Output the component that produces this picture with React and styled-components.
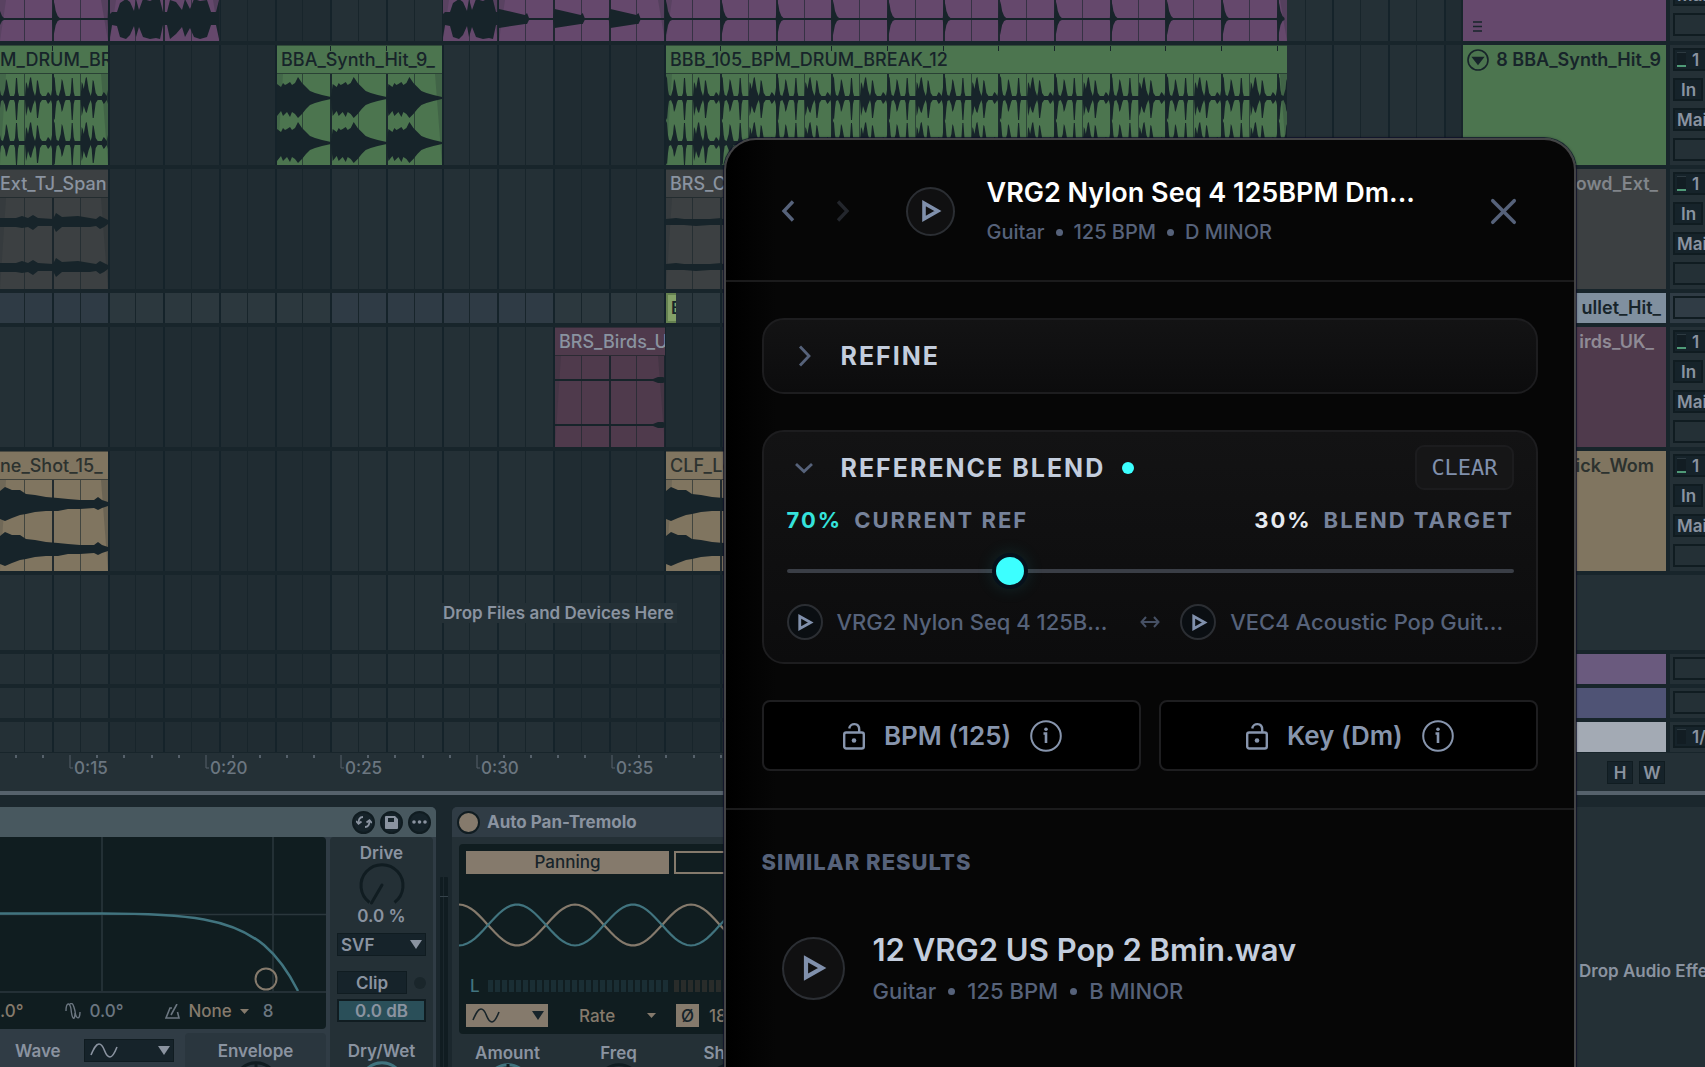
import React from "react";
import styled, { createGlobalStyle, css } from "styled-components";
import { X } from "lucide-react";

const c = {
  gap: "#18252b",
  panel: "#243036",
  well: "#101d20",
  field: "#16232a",
  edge: "#101c21",
  raised: "#303c45",
  text: "#8a93a0",
  textDim: "#6b7680",
  teal: "#41747f",
  tan: "#857a6c",
  ink: "#17242a",
  purple: "#65486c",
  green: "#4c754f",
  grey: "#3c4042",
  plum: "#4f3a4c",
  sand: "#807560",
  slate: "#56627a",
  steel: "#8090ac",
  mist: "#c3cddd",
  cyan: "#3cffff",
};

const Global = createGlobalStyle`
  *, *::before, *::after { box-sizing: border-box; }
  body { margin: 0; background: ${c.gap}; font-family: Inter, sans-serif; }
  button, input, select { font: inherit; color: inherit; margin: 0; }
  button { border: 0; padding: 0; background: none; cursor: pointer; }
  h1, h2, h3, p { margin: 0; font-weight: inherit; font-size: inherit; }
`;

/* ---------- shell ---------- */

const Shell = styled.div`
  position: relative;
  display: flex;
  flex-direction: column;
  height: 100vh;
  overflow: hidden;
  font-size: 17px;
  line-height: 20px;
  font-weight: 600;
  color: ${c.text};
`;

const Tracks = styled.main`
  display: flex;
  flex-direction: column;
  flex: none;
  gap: 4px;
`;

const TrackRow = styled.section`
  display: grid;
  grid-template-columns: minmax(0, 1fr) 203px 39px;
  height: ${(p) => p.$h}px;
`;

const Lane = styled.div`
  position: relative;
  overflow: hidden;
  border-right: 2px solid ${c.gap};
`;

const GridArt = styled.svg`
  position: absolute;
  inset: 0;
  width: 100%;
  height: 100%;
`;

const DropHint = styled.div`
  position: relative;
  display: flex;
  align-items: center;
  height: 100%;
  padding-left: 440px;
  span { background: ${c.panel}; padding: 0 3px; }
`;

/* ---------- clips ---------- */

const ClipBox = styled.article`
  position: absolute;
  top: 0;
  bottom: 0;
  left: ${(p) => p.$x}px;
  width: ${(p) => p.$w}px;
  overflow: hidden;
  background: ${(p) => p.$bg};
`;

const ClipArt = styled.svg`
  position: absolute;
  inset: 0;
`;

const ClipName = styled.h3`
  position: relative;
  height: 29px;
  padding: 4px 0 0 ${(p) => (p.$cut ? 0 : 4)}px;
  border-top: 1px solid rgba(20, 32, 36, 0.5);
  border-bottom: 1px solid rgba(20, 32, 36, 0.6);
  font-size: 18px;
  font-weight: 500;
  white-space: nowrap;
  color: ${(p) => p.$fg};
`;

const STEP = 27.84;
const ORIGIN = 25;
const lineX = (i) => Math.round(ORIGIN + i * STEP);
const LINES = Array.from({ length: 120 }, (_, i) => i);

function LaneGrid({ group }) {
  const light = group ? "#2f3b45" : "#243036";
  const dark = group ? "#2c383e" : "#202c32";
  return (
    <GridArt aria-hidden="true">
      <rect width="100%" height="100%" fill={light} />
      {[3, 19, 35, 51, 67].map((i) => (
        <rect key={i} x={lineX(i)} width={lineX(i + 8) - lineX(i)} height="100%" fill={dark} />
      ))}
      {LINES.map((i) => (
        <rect key={i} x={lineX(i) - 1} width={i % 2 ? 2 : 1} height="100%" fill={i % 2 ? "#15232a" : "#18252b"} />
      ))}
    </GridArt>
  );
}

/* Each envelope is a list of [x, top, bottom] samples around a centre line. */
const DRUM = [
  [0, 22, 20], [1, 20, 22], [2, 8, 10], [3, 3, 3], [5, 2, 2], [7, 9, 7], [8, 19, 14], [9, 17, 12], [11, 6, 4], [12, 2, 2], [16, 2, 2],
  [17, 5, 5], [18, 20, 22], [19, 20, 22], [20, 6, 6], [21, 2, 2], [27, 2, 2], [28, 16, 18], [29, 14, 14], [30, 9, 8], [32, 20, 14],
  [33, 21, 15], [35, 8, 7], [37, 2, 2], [38, 6, 6], [39, 18, 20], [40, 17, 20], [42, 5, 5], [44, 2, 2], [48, 2, 2], [50, 6, 6],
  [51, 5, 5], [53, 2, 2], [54, 8, 6],
];
const SYNTH = [
  [0, 14, 18], [4, 11, 13], [6, 15, 18], [8, 13, 16], [10, 14, 14], [13, 16, 19], [15, 13, 14], [18, 15, 16], [21, 21, 20],
  [25, 15, 16], [29, 11, 11], [33, 7, 7], [38, 5, 5], [45, 3, 3], [54, 1, 1],
];
const TICK = [[0, 18, 16], [1, 14, 11], [2, 8, 6], [4, 3, 2], [6, 1, 1], [54, 1, 1], [55, 10, 8]];
const WEDGE = [[0, 10, 9], [26, 4, 5], [28, 6, 5], [30, 1, 1], [54, 1, 1]];
const VOICE = [
  [0, 5, 18], [2, 7, 6], [7, 7, 7], [10, 16, 18], [16, 20, 20], [20, 17, 16], [24, 8, 7], [26, 20, 18], [29, 9, 8],
  [33, 20, 18], [40, 18, 20], [46, 21, 19], [50, 19, 20], [53, 7, 6], [57, 7, 6], [60, 19, 20], [66, 17, 15],
  [72, 9, 8], [75, 20, 18], [80, 10, 9], [84, 20, 18], [90, 18, 20], [97, 19, 18], [101, 7, 6], [106, 7, 6], [109, 19, 20],
];
const CROWD = [
  [0, 4, 5], [16, 4, 5], [22, 6, 6], [28, 4, 5], [33, 7, 8], [38, 4, 4], [53, 3, 4], [56, 9, 10], [62, 5, 5],
  [78, 6, 5], [90, 4, 5], [96, 3, 4], [100, 6, 7], [104, 4, 5], [108, 2, 2],
];
const HUM = [[0, 3, 3], [10, 4, 3], [18, 3, 3], [30, 3, 4], [44, 3, 3], [56, 4, 3]];
const BIRDS = [[0, 1, 1], [98, 1, 1], [103, 3, 3], [108, 3, 3], [110, 2, 2]];
const GUITAR = [
  [0, 13, 15], [5, 17, 17], [12, 14, 14], [20, 14, 11], [26, 10, 10], [35, 9, 8], [46, 7, 7], [58, 6, 7], [68, 5, 5],
  [80, 4, 5], [94, 4, 4], [98, 7, 6], [102, 4, 4], [108, 2, 2],
];

function wavePath(env, cy, w, period) {
  const span = period || w;
  const top = [];
  const bottom = [];
  for (let s = 0; s < w; s += span) {
    env.forEach(([x, t, b]) => {
      const px = Math.min(s + x, w);
      if (s + x <= w + 4) {
        top.push(`${px.toFixed(1)},${cy - t}`);
        bottom.unshift(`${px.toFixed(1)},${cy + b}`);
      }
    });
  }
  return `M${top.join("L")}L${bottom.join("L")}Z`;
}

function Clip({ x, w, bg, fg, name, cut, env, period, offset = 0, h = 120, centres = [53, 98] }) {
  return (
    <ClipBox $x={x} $w={w} $bg={bg}>
      <ClipArt width={w} height={h} aria-hidden="true">
        {LINES.map((i) => {
          const px = lineX(i) - 1 - x;
          return px > 0 && px < w ? (
            <g key={i} fill={c.ink}>
              <rect x={px} y={name ? 29 : 0} width={i % 2 ? 2 : 1} height={h} opacity={i % 2 ? 0.9 : 0.6} />
              {bg === c.green && i % 2 === 1 && <rect x={px} y="1" width="1" height="5" />}
            </g>
          ) : null;
        })}
        <path d={`M${w - 7} ${name ? 29 : 0}H${w}V${h}Z`} fill={c.ink} opacity="0.2" />
        <path d={`M6 ${name ? 29 : 0}H0V${h}Z`} fill={c.ink} opacity="0.15" />
        <g fill={c.ink} transform={`translate(${-offset} 0)`}>
          {centres.map((cy) => (
            <path key={cy} d={wavePath(env, cy, w + offset, period)} />
          ))}
        </g>
      </ClipArt>
      {name && <ClipName $fg={fg} $cut={cut}>{name}</ClipName>}
    </ClipBox>
  );
}

const MiniClip = styled(ClipBox)`
  padding: 3px 0 0 3px;
  border: 2px solid #64804f;
  border-right: 0;
  color: ${c.ink};
`;

/* ---------- track headers and mixer ---------- */

const TrackHead = styled.header`
  display: flex;
  align-items: ${(p) => (p.$bottom ? "flex-end" : "flex-start")};
  justify-content: space-between;
  padding: 4px 5px ${(p) => (p.$bottom ? 9 : 4)}px 4px;
  overflow: hidden;
  background: ${(p) => p.$bg};
  color: ${(p) => p.$fg || c.ink};
  font-size: 18px;
  line-height: 22px;
  white-space: nowrap;
`;

const TailName = styled.span`
  margin-left: auto;
  padding-right: ${(p) => p.$end || 0}px;
`;

const FoldButton = styled.button`
  display: flex;
`;

const Mixer = styled.div`
  display: flex;
  flex-direction: column;
  justify-content: ${(p) => (p.$bottom ? "flex-end" : "flex-start")};
  gap: 7px;
  overflow: hidden;
  padding: 3px 0 5px 3px;
  border-left: 4px solid ${c.gap};
  background: ${(p) => (p.$group ? c.raised : c.panel)};
`;

const Slot = styled.div`
  flex: none;
  display: flex;
  align-items: center;
  gap: 6px;
  width: ${(p) => (p.$short ? 30 : 60)}px;
  height: 23px;
  padding-left: ${(p) => (p.$short ? 6 : 2)}px;
  border: 2px solid ${c.edge};
  background: ${(p) => (p.$filled ? c.field : "transparent")};
`;

const Led = styled.i`
  width: 9px;
  height: 15px;
  background: #121d23;
  border-top: 1px solid #2c3940;
  border-bottom: 2px solid ${(p) => (p.$on ? "#4f9a77" : "#121d23")};
`;

function FullMixer() {
  return (
    <Mixer>
      <Slot $filled><Led $on />1</Slot>
      <Slot $filled $short>In</Slot>
      <Slot $filled>Main</Slot>
      <Slot />
    </Mixer>
  );
}

/* ---------- ruler ---------- */

const RulerRow = styled.div`
  flex: none;
  display: grid;
  grid-template-columns: minmax(0, 1fr) 242px;
  height: 39px;
  border-top: 1px solid ${c.gap};
  background: ${c.panel};
`;

const RulerArt = styled.svg`
  width: 100%;
  height: 38px;
  font-size: 17px;
  font-weight: 500;
`;

const ZoomButtons = styled.div`
  display: flex;
  justify-content: flex-end;
  align-items: flex-start;
  gap: 6px;
  padding: 8px 40px 0 0;
`;

const SquareButton = styled.button`
  width: 26px;
  height: 23px;
  border: 1px solid ${c.edge};
  background: ${c.field};
`;

function Ruler() {
  const marks = Array.from({ length: 54 }, (_, i) => i);
  return (
    <RulerArt aria-label="Time ruler">
      {marks.map((i) => {
        const x = Math.round(16 + i * 27.1);
        const major = i % 5 === 2;
        const sec = 15 + ((i - 2) / 5) * 5;
        return major ? (
          <g key={i}>
            <path d={`M${x} 2v13h3`} fill="none" stroke="#56616b" strokeWidth="1" />
            {x < 720 && <text x={x + 4} y="21" fill={c.textDim}>{`0:${sec}`}</text>}
          </g>
        ) : (
          <rect key={i} x={x - 1} y="2" width="2" height="3" fill="#56616b" />
        );
      })}
    </RulerArt>
  );
}

/* ---------- devices ---------- */

const Devices = styled.section`
  flex: 1;
  min-height: 0;
  display: flex;
  gap: 4px;
  padding-top: 12px;
  border-top: 4px solid #56626c;
  background: #1b272d;
  overflow: hidden;
`;

const Device = styled.article`
  display: flex;
  flex-direction: column;
  flex: ${(p) => (p.$w ? "none" : "1")};
  width: ${(p) => (p.$w ? `${p.$w}px` : "auto")};
  min-width: 0;
  border-radius: ${(p) => (p.$w ? "0 5px 0 0" : "5px 5px 0 0")};
  overflow: hidden;
  background: ${(p) => p.$bg};
`;

const TitleBar = styled.header`
  display: flex;
  align-items: center;
  justify-content: ${(p) => (p.$end ? "flex-end" : "flex-start")};
  gap: ${(p) => (p.$end ? 5 : 7)}px;
  height: 30px;
  flex: none;
  padding: 0 5px;
  background: ${(p) => p.$bg};
  font-weight: 700;
`;

const RoundButton = styled.button`
  display: grid;
  place-items: center;
  width: 23px;
  height: 23px;
  border-radius: 50%;
  background: ${(p) => (p.$tan ? c.tan : c.field)};
  border: 2px solid ${c.edge};
`;

const DeviceBody = styled.div`
  flex: 1;
  min-height: 0;
  display: flex;
  justify-content: space-between;
  padding-right: 3px;
`;

const FilterColumn = styled.div`
  width: 326px;
  display: flex;
  flex-direction: column;
  > * { flex-shrink: 0; }
`;

const FilterGraph = styled.svg`
  display: block;
  width: 326px;
  height: 154px;
  background: ${c.well};
  border-radius: 0 4px 0 0;
`;

const Readouts = styled.div`
  display: flex;
  align-items: center;
  height: 38px;
  border-top: 2px solid ${c.panel};
  border-radius: 0 0 4px 0;
  background: ${c.well};
  font-weight: 500;
  color: ${c.textDim};
`;

const Readout = styled.span`
  display: flex;
  align-items: center;
  gap: 8px;
  margin-right: ${(p) => p.$gap}px;
  color: ${(p) => (p.$tan ? c.tan : "inherit")};
`;

const WaveRow = styled.div`
  flex: 1;
  display: grid;
  grid-template-columns: 1fr 90px 141px;
  column-gap: 11px;
  align-items: start;
  padding-left: 15px;
`;

const WaveLabel = styled.label`
  padding-top: 12px;
`;

const Panel = styled.div`
  display: flex;
  flex-direction: column;
  align-items: center;
  width: ${(p) => p.$w}px;
  height: 100%;
  margin-top: ${(p) => p.$top}px;
  padding-top: ${(p) => p.$pad}px;
  border-radius: 4px 4px 0 0;
  background: ${(p) => p.$bg};
  > * { flex-shrink: 0; }
`;

const PickerBox = styled.div`
  display: grid;
  flex: none;
  align-items: center;
  width: ${(p) => p.$w}px;
  height: 23px;
  margin-top: ${(p) => p.$top || 0}px;
  border: 1px solid ${(p) => (p.$tan ? c.tan : c.edge)};
  background: ${(p) => (p.$tan ? c.tan : c.field)};
  color: ${(p) => (p.$tan ? c.ink : c.text)};
  > * { grid-area: 1 / 1; }
  > svg { justify-self: end; margin-right: 3px; pointer-events: none; }
  > svg[data-side="start"] { justify-self: start; margin: 0 0 0 5px; }
`;

const PickerSelect = styled.select`
  appearance: none;
  width: 100%;
  height: 21px;
  padding: 0 0 0 3px;
  border: 0;
  background: transparent;
  ${(p) => p.$hidden && css`opacity: 0;`}
`;

const ClipRow = styled.div`
  display: flex;
  align-items: center;
  justify-content: space-between;
  width: 89px;
  margin-top: 15px;
`;

const ClipButton = styled.button`
  width: 70px;
  height: 23px;
  border: 1px solid ${c.edge};
  background: ${c.field};
`;

const Lamp = styled.i`
  width: 12px;
  height: 12px;
  border-radius: 50%;
  background: #1a262b;
`;

const Amount = styled.input`
  width: 89px;
  height: 23px;
  margin: 5px 0 19px;
  padding: 0;
  border: 2px solid ${c.edge};
  background: #2a4f59;
  text-align: center;
`;

const MeterStrip = styled.div`
  flex: none;
  width: 8px;
  margin-top: 70px;
  background: linear-gradient(${c.edge}, ${c.edge}) 0 0 / 3px 100% no-repeat,
    linear-gradient(${c.edge}, ${c.edge}) 100% 0 / 4px 100% no-repeat;
  border-radius: 1px;
  &::before {
    content: "";
    display: block;
    height: 1px;
    margin-top: 19px;
    background: #35424a;
  }
`;

const PanScreen = styled.div`
  flex: none;
  display: flex;
  flex-direction: column;
  height: 190px;
  margin: 7px 7px 0;
  padding: 7px 0;
  border-radius: 4px;
  background: ${c.well};
`;

const PanRow = styled.div`
  display: flex;
  align-items: center;
  gap: ${(p) => p.$gap || 0}px;
  height: ${(p) => p.$h}px;
  margin-top: ${(p) => p.$top || 0}px;
  padding-left: ${(p) => p.$left || 7}px;
  color: ${(p) => p.$fg || c.tan};
  font-weight: 500;
`;

const Tab = styled.button`
  width: 203px;
  height: 23px;
  border: 2px solid ${c.tan};
  background: ${(p) => (p.$on ? c.tan : "transparent")};
  line-height: 19px;
  color: ${c.ink};
`;

const PanWave = styled.svg`
  width: 100%;
  height: 100px;
`;

const RateButton = styled.button`
  display: flex;
  align-items: center;
  justify-content: space-between;
  width: 77px;
  margin: 0 20px 0 31px;
  color: ${c.tan};
`;

const PhaseButton = styled.button`
  width: 23px;
  height: 23px;
  margin-right: 10px;
  background: ${c.tan};
  color: ${c.ink};
`;

const KnobRow = styled.div`
  display: flex;
  padding-top: 9px;
`;

const KnobCell = styled.div`
  display: flex;
  flex-direction: column;
  align-items: center;
  flex: none;
  width: 111px;
`;

const DropZone = styled.aside`
  flex: none;
  display: flex;
  align-items: center;
  width: 129px;
  padding: 67px 0 0 3px;
  overflow: hidden;
  white-space: nowrap;
  background: ${c.panel};
`;

const Down = ({ w = 12, h = 9 }) => (
  <svg width={w} height={h} viewBox="0 0 12 9" preserveAspectRatio="none" fill="currentColor" aria-hidden="true">
    <path d="M0 0H12L6 9Z" />
  </svg>
);

const SineIcon = ({ side }) => (
  <svg data-side={side} width="28" height="17" viewBox="0 0 28 17" fill="none" stroke="currentColor" strokeWidth="1.6" aria-hidden="true">
    <path d="M1 13C4 6 6 2 9 2C15 2 14 15 20 15C23 15 25 10 27 5" />
  </svg>
);

const Knob = ({ top, color = c.edge, angle = true }) => (
  <svg width="48" height="43" viewBox="0 0 48 43" fill="none" strokeWidth="3" aria-hidden="true">
    <path d="M11.500 39.500A21 21 0 1 1 36.500 39.500" stroke={color} />
    {angle && <path d="M24 22L13.500 40" stroke={c.edge} strokeLinecap="round" />}
    {top && <path d="M24 1V12" stroke={c.edge} />}
  </svg>
);

function FilterDevice() {
  return (
    <Device $w={436} $bg={c.raised}>
      <TitleBar $bg="#48585f" $end>
        <RoundButton aria-label="Hot-swap">
          <svg width="16" height="14" viewBox="0 0 16 14" fill="none" stroke="currentColor" strokeWidth="1.8">
            <path d="M7 2C3.500 2 2.500 4.500 2.500 8M0 6L2.500 8.800L5.500 6.500M9 12C12.500 12 13.500 9.500 13.500 6M16 8L13.500 5.200L10.500 7.500" />
          </svg>
        </RoundButton>
        <RoundButton aria-label="Save preset">
          <svg width="13" height="13" viewBox="0 0 13 13" fill="currentColor"><path d="M0 1Q0 0 1 0H10L13 3V12Q13 13 12 13H1Q0 13 0 12ZM3 2V6H9V2Z" fillRule="evenodd" /></svg>
        </RoundButton>
        <RoundButton aria-label="More options">
          <svg width="15" height="4" viewBox="0 0 15 4" fill="currentColor"><circle cx="2" cy="2" r="1.800" /><circle cx="7.500" cy="2" r="1.800" /><circle cx="13" cy="2" r="1.800" /></svg>
        </RoundButton>
      </TitleBar>
      <DeviceBody>
        <FilterColumn>
          <FilterGraph viewBox="0 0 326 154" aria-label="Filter response">
            <path d="M102 0V154M273 0V154M0 77.500H326" stroke="#2a373c" strokeWidth="1.500" />
            <path d="M0 76.500H102C190 76.500 232 82 264 108C278 120 289 136 298 154" fill="none" stroke={c.teal} strokeWidth="2.500" />
            <circle cx="266" cy="142" r="10.500" fill="none" stroke={c.tan} strokeWidth="2" />
          </FilterGraph>
          <Readouts>
            <Readout $tan $gap={42}>.0°</Readout>
            <Readout $gap={42}>
              <svg width="16" height="16" viewBox="0 0 16 16" fill="none" stroke="currentColor" strokeWidth="1.400" aria-hidden="true">
                <path d="M1 8C1 -1 5 -1 6 6C7 17 10 18 10 10M5 1C8 -1 9 4 10 8C11 17 15 17 15 9" />
              </svg>
              0.0°
            </Readout>
            <Readout $tan $gap={14}>
              <svg width="15" height="15" viewBox="0 0 15 15" fill="none" stroke={c.textDim} strokeWidth="1.600" aria-hidden="true">
                <path d="M7 4H5L1 14H14L12.500 8M6 11L12 0" />
              </svg>
              None
              <Down w={9} h={5} />
            </Readout>
            <Readout>8</Readout>
          </Readouts>
          <WaveRow>
            <WaveLabel htmlFor="lfo-wave">Wave</WaveLabel>
            <PickerBox $w={90} $top={10}>
              <SineIcon side="start" />
              <PickerSelect id="lfo-wave" $hidden><option aria-label="Sine" /></PickerSelect>
              <Down />
            </PickerBox>
            <Panel $w={141} $top={4} $pad={8} $bg="#2a363e">
              Envelope
              <Knob angle={false} top />
            </Panel>
          </WaveRow>
        </FilterColumn>
        <Panel $w={103} $top={0} $pad={6} $bg={c.panel}>
          Drive
          <Knob />
          0.0 %
          <PickerBox $w={89} $top={7}>
            <PickerSelect aria-label="Circuit" defaultValue="SVF"><option>SVF</option></PickerSelect>
            <Down />
          </PickerBox>
          <ClipRow><ClipButton>Clip</ClipButton><Lamp /></ClipRow>
          <Amount aria-label="Output level" defaultValue="0.0 dB" />
          Dry/Wet
          <Knob color={c.teal} angle={false} />
        </Panel>
      </DeviceBody>
    </Device>
  );
}

const sine = (sign) => {
  const pts = [];
  for (let x = 0; x <= 560; x += 4) pts.push(`${x},${(51 - sign * 20.5 * Math.cos((x * 2 * Math.PI) / 116)).toFixed(1)}`);
  return pts.join(" ");
};

function PanDevice() {
  return (
    <Device $bg={c.panel}>
      <TitleBar $bg={c.raised}>
        <RoundButton $tan aria-label="Device on" />
        Auto Pan-Tremolo
      </TitleBar>
      <PanScreen>
        <PanRow $h={23} $gap={5}>
          <Tab $on>Panning</Tab>
          <Tab aria-label="Tremolo" />
        </PanRow>
        <PanWave aria-label="Pan modulation">
          <polyline points={sine(1)} fill="none" stroke={c.tan} strokeWidth="2.200" />
          <polyline points={sine(-1)} fill="none" stroke={c.teal} strokeWidth="2.200" />
        </PanWave>
        <PanRow $h={24} $left={11} $gap={8} $fg={c.teal}>
          L
          <svg width="400" height="12" aria-hidden="true">
            {Array.from({ length: 56 }, (_, i) => (
              <rect key={i} x={i * 7 + (i > 25 ? 4 : 0)} width="5" height="12" fill={i > 25 ? "#292c2a" : "#1a2e34"} />
            ))}
          </svg>
        </PanRow>
        <PanRow $h={23} $top={6}>
          <PickerBox $w={82} $tan>
            <SineIcon side="start" />
            <PickerSelect $hidden aria-label="Modulation shape"><option aria-label="Sine" /></PickerSelect>
            <Down />
          </PickerBox>
          <RateButton>Rate<Down w={9} h={5} /></RateButton>
          <PhaseButton>Ø</PhaseButton>
          180°
        </PanRow>
      </PanScreen>
      <KnobRow>
        <KnobCell>Amount<Knob color={c.teal} angle={false} top /></KnobCell>
        <KnobCell>Freq<Knob angle={false} /></KnobCell>
        <KnobCell>Shape<Knob angle={false} /></KnobCell>
      </KnobRow>
    </Device>
  );
}

/* ---------- sample browser dialog ---------- */

const Dialog = styled.div`
  position: absolute;
  top: 138px;
  right: 129px;
  bottom: 0;
  width: 50%;
  overflow: hidden;
  border: 2px solid #434345;
  border-bottom: 0;
  border-radius: 32px 32px 0 0;
  background: linear-gradient(90deg, #000, #060606 50px);
  box-shadow: 0 0 0 1px rgba(14, 16, 44, 0.7), 0 0 3px rgba(0, 0, 0, 0.6);
  font-weight: 500;
`;

const DialogHeader = styled.header`
  display: flex;
  align-items: center;
  height: 142px;
  padding: 2px 47px 0 37px;
  border-bottom: 2px solid #1b1b1c;
`;

const NavButton = styled.button`
  display: grid;
  place-items: center;
  width: 53px;
  height: 48px;
  color: ${c.slate};
  &:disabled { color: #23262c; }
`;

const PlayButton = styled.button`
  flex: none;
  display: grid;
  place-items: center;
  width: ${(p) => p.$size}px;
  height: ${(p) => p.$size}px;
  margin-left: ${(p) => p.$left || 0}px;
  border: 2px solid #2b2e33;
  border-radius: 50%;
  background: ${(p) => (p.$deep ? "#0a0e12" : "#101011")};
  color: ${c.steel};
`;

const TitleBlock = styled.div`
  flex: 1;
  display: flex;
  flex-direction: column;
  gap: 8px;
  margin-left: ${(p) => p.$left}px;
`;

const SampleTitle = styled.h2`
  font-size: ${(p) => (p.$large ? 31 : 27)}px;
  line-height: ${(p) => (p.$large ? 38 : 34)}px;
  font-weight: 600;
  white-space: nowrap;
  color: ${(p) => (p.$large ? c.mist : "#fff")};
`;

const Meta = styled.p`
  display: flex;
  align-items: center;
  gap: ${(p) => (p.$large ? 12 : 11)}px;
  font-size: ${(p) => (p.$large ? 22 : 20)}px;
  line-height: 28px;
  color: ${c.slate};
  i { width: 7px; height: 7px; border-radius: 50%; background: currentColor; }
`;

const CloseButton = styled.button`
  display: grid;
  place-items: center;
  width: 48px;
  height: 48px;
  color: ${c.slate};
`;

const Controls = styled.div`
  display: flex;
  flex-direction: column;
  gap: 36px;
  padding: 36px 36px 37px;
  border-bottom: 2px solid #1b1b1c;
`;

const Card = styled.section`
  padding: ${(p) => (p.$open ? "13px 22px 22px 23px" : "0 22px 0 23px")};
  border: 2px solid #1d1d1f;
  border-radius: 22px;
  background: linear-gradient(#131314, #0c0c0d);
`;

const CardHead = styled.div`
  display: flex;
  align-items: center;
  justify-content: space-between;
  height: ${(p) => p.$h}px;
`;

const Fold = styled.button`
  display: flex;
  align-items: center;
  gap: 25px;
  padding-left: 5px;
  font-size: 25px;
  line-height: 30px;
  font-weight: 700;
  letter-spacing: 2px;
  color: ${c.mist};
  svg { color: ${c.slate}; }
`;

const ActiveDot = styled.i`
  width: 12px;
  height: 12px;
  margin-left: -8px;
  border-radius: 50%;
  background: ${c.cyan};
`;

const ClearButton = styled.button`
  width: 99px;
  height: 45px;
  border: 2px solid #1c1c1e;
  border-radius: 9px;
  background: #161617;
  font-family: "DejaVu Sans Mono", monospace;
  font-size: 22px;
  color: ${c.steel};
`;

const BlendLabels = styled.div`
  display: flex;
  justify-content: space-between;
  margin-top: 16px;
  font-size: 22px;
  line-height: 28px;
  font-weight: 700;
  letter-spacing: 2px;
  color: #76829a;
`;

const Percent = styled.strong`
  margin-right: 12px;
  font-weight: 700;
  color: ${(p) => (p.$accent ? "#35e3dc" : "#e6eaf0")};
`;

const Slider = styled.input`
  appearance: none;
  display: block;
  width: 100%;
  height: 28px;
  margin: 23px 0 19px;
  background: transparent;
  &::-webkit-slider-runnable-track {
    height: 4px;
    border-radius: 2px;
    background: #3a3e46;
  }
  &::-webkit-slider-thumb {
    appearance: none;
    width: 28px;
    height: 28px;
    margin-top: -12px;
    border-radius: 50%;
    background: ${c.cyan};
    box-shadow: 0 0 0 4px #06101b, 0 0 20px rgba(40, 220, 230, 0.22);
  }
`;

const BlendPair = styled.div`
  display: flex;
  align-items: center;
  gap: 20px;
  color: #465064;
`;

const BlendTrack = styled.div`
  flex: 1;
  display: flex;
  align-items: center;
  gap: 14px;
  font-size: 22px;
  line-height: 28px;
  white-space: nowrap;
  color: ${c.slate};
`;

const Locks = styled.div`
  display: grid;
  grid-template-columns: 1fr 1fr;
  gap: 18px;
`;

const LockButton = styled.button`
  display: flex;
  align-items: center;
  justify-content: center;
  gap: 19px;
  height: 71px;
  padding-left: 3px;
  border: 2px solid #1e1e20;
  border-radius: 8px;
  background: #000;
  font-size: 26px;
  font-weight: 600;
  color: #8795ad;
`;

const Results = styled.section`
  padding: 38px 36px 0;
`;

const ResultsTitle = styled.h2`
  font-size: 22px;
  line-height: 28px;
  font-weight: 800;
  letter-spacing: 1px;
  color: ${c.slate};
`;

const ResultRow = styled.article`
  display: flex;
  align-items: center;
  margin-top: 55px;
  padding-left: 20px;
`;

const Chevron = ({ dir, w = 3 }) => {
  const d = { left: "M16 2.500L7 12L16 21.500", right: "M8 2.500L17 12L8 21.500", down: "M4 8L12 15.500L20 8" }[dir];
  return (
    <svg width="24" height="24" viewBox="0 0 24 24" fill="none" stroke="currentColor" strokeWidth={w} aria-hidden="true">
      <path d={d} />
    </svg>
  );
};

const PlayGlyph = ({ size }) => (
  <svg width={size} height={size} viewBox="0 0 20 20" fill="none" stroke="currentColor" strokeWidth="3" aria-hidden="true">
    <path d="M5 3.500V16.500L16.500 10Z" />
  </svg>
);

const LockGlyph = () => (
  <svg width="22" height="28" viewBox="0 0 22 28" fill="none" stroke="currentColor" strokeWidth="2.400" aria-hidden="true">
    <rect x="1.200" y="10.500" width="19.600" height="16" rx="2" />
    <path d="M6.200 6.500C7.200 0.500 16.200 0.500 16.200 7.500V10.500" />
    <circle cx="11" cy="18.500" r="2.300" fill="currentColor" stroke="none" />
  </svg>
);

const InfoGlyph = () => (
  <svg width="32" height="32" viewBox="0 0 32 32" fill="none" stroke="currentColor" strokeWidth="2" aria-hidden="true">
    <circle cx="16" cy="16" r="14.800" />
    <path d="M13.500 13.500H16V23" strokeWidth="2.600" />
    <circle cx="16" cy="9.300" r="1.800" fill="currentColor" stroke="none" />
  </svg>
);

const SwapGlyph = () => (
  <svg width="20" height="14" viewBox="0 0 20 14" fill="none" stroke="currentColor" strokeWidth="2" aria-hidden="true">
    <path d="M1.500 7H18.500M6 2L1.500 7L6 12M14 2L18.500 7L14 12" />
  </svg>
);

function SampleDialog() {
  return (
    <Dialog role="dialog" aria-label="Similar samples">
      <DialogHeader>
        <NavButton aria-label="Back"><Chevron dir="left" w={3.4} /></NavButton>
        <NavButton aria-label="Forward" disabled><Chevron dir="right" w={3.4} /></NavButton>
        <PlayButton $size={49} $left={37} aria-label="Play sample"><PlayGlyph size={24} /></PlayButton>
        <TitleBlock $left={32}>
          <SampleTitle>VRG2 Nylon Seq 4 125BPM Dm...</SampleTitle>
          <Meta>Guitar<i />125 BPM<i />D MINOR</Meta>
        </TitleBlock>
        <CloseButton aria-label="Close"><X size={43} strokeWidth={2} /></CloseButton>
      </DialogHeader>
      <Controls>
        <Card>
          <CardHead $h={72}>
            <Fold aria-expanded="false"><Chevron dir="right" w={2.8} />REFINE</Fold>
          </CardHead>
        </Card>
        <Card $open>
          <CardHead $h={45}>
            <Fold aria-expanded="true"><Chevron dir="down" w={2.8} />REFERENCE BLEND<ActiveDot /></Fold>
            <ClearButton>CLEAR</ClearButton>
          </CardHead>
          <BlendLabels>
            <span><Percent $accent>70%</Percent>CURRENT REF</span>
            <span><Percent>30%</Percent>BLEND TARGET</span>
          </BlendLabels>
          <Slider type="range" min="0" max="100" defaultValue="30" aria-label="Reference blend" />
          <BlendPair>
            <BlendTrack>
              <PlayButton $size={36} $deep aria-label="Play current reference"><PlayGlyph size={19} /></PlayButton>
              VRG2 Nylon Seq 4 125B...
            </BlendTrack>
            <SwapGlyph />
            <BlendTrack>
              <PlayButton $size={36} $deep aria-label="Play blend target"><PlayGlyph size={19} /></PlayButton>
              VEC4 Acoustic Pop Guit...
            </BlendTrack>
          </BlendPair>
        </Card>
        <Locks>
          <LockButton><LockGlyph />BPM (125)<InfoGlyph /></LockButton>
          <LockButton><LockGlyph />Key (Dm)<InfoGlyph /></LockButton>
        </Locks>
      </Controls>
      <Results>
        <ResultsTitle>SIMILAR RESULTS</ResultsTitle>
        <ResultRow>
          <PlayButton $size={63} aria-label="Play 12 VRG2 US Pop 2 Bmin.wav"><PlayGlyph size={28} /></PlayButton>
          <TitleBlock $left={28}>
            <SampleTitle $large>12 VRG2 US Pop 2 Bmin.wav</SampleTitle>
            <Meta $large>Guitar<i />125 BPM<i />B MINOR</Meta>
          </TitleBlock>
        </ResultRow>
      </Results>
    </Dialog>
  );
}

/* ---------- page ---------- */

const BEAT = STEP * 2;

export default function App() {
  return (
    <Shell>
      <Global />
      <Tracks>
        <TrackRow $h={41}>
          <Lane>
            <LaneGrid />
            <Clip x={0} w={108} bg={c.purple} env={TICK} period={BEAT} offset={2} h={41} centres={[19]} />
            <Clip x={110} w={110} bg={c.purple} env={VOICE} h={41} centres={[19]} />
            <Clip x={443} w={55} bg={c.purple} env={VOICE} h={41} centres={[19]} />
            <Clip x={499} w={166} bg={c.purple} env={WEDGE} period={BEAT} h={41} centres={[19]} />
            <Clip x={666} w={621} bg={c.purple} env={TICK} period={BEAT} h={41} centres={[19]} />
          </Lane>
          <TrackHead $bg={c.purple} $bottom>
            <svg width="18" height="11" viewBox="0 0 18 11" stroke="currentColor" strokeWidth="1.500" aria-hidden="true"><path d="M6 1H15M6 5.500H15M6 10H15" /></svg>
          </TrackHead>
          <Mixer $bottom>
            <Slot $filled>Main</Slot>
            <Slot />
          </Mixer>
        </TrackRow>

        <TrackRow $h={120}>
          <Lane>
            <LaneGrid />
            <Clip x={0} w={108} bg={c.green} fg={c.ink} cut name="M_DRUM_BR" env={DRUM} period={BEAT} offset={2} />
            <Clip x={277} w={165} bg={c.green} fg={c.ink} name="BBA_Synth_Hit_9_" env={SYNTH} period={BEAT} />
            <Clip x={666} w={621} bg={c.green} fg={c.ink} name="BBB_105_BPM_DRUM_BREAK_12" env={DRUM} period={BEAT} />
          </Lane>
          <TrackHead $bg={c.green}>
            <FoldButton aria-label="Fold track">
              <svg width="22" height="22" viewBox="0 0 22 22" fill="none" stroke="currentColor" strokeWidth="1.600">
                <circle cx="11" cy="11" r="10" /><path d="M6 8.500H16L11 15Z" fill="currentColor" />
              </svg>
            </FoldButton>
            8 BBA_Synth_Hit_9
          </TrackHead>
          <FullMixer />
        </TrackRow>

        <TrackRow $h={120}>
          <Lane>
            <LaneGrid />
            <Clip x={0} w={108} bg={c.grey} fg={c.text} cut name="Ext_TJ_Span" env={CROWD} />
            <Clip x={666} w={621} bg={c.grey} fg={c.text} name="BRS_C" env={HUM} period={BEAT} />
          </Lane>
          <TrackHead $bg={c.grey} $fg="#81858a"><TailName $end={3}>owd_Ext_</TailName></TrackHead>
          <FullMixer />
        </TrackRow>

        <TrackRow $h={30}>
          <Lane>
            <LaneGrid group />
            <MiniClip $x={666} $w={10} $bg="#84a168">B</MiniClip>
          </Lane>
          <TrackHead $bg="#80909f"><TailName>ullet_Hit_</TailName></TrackHead>
          <Mixer $group><Slot /></Mixer>
        </TrackRow>

        <TrackRow $h={120}>
          <Lane>
            <LaneGrid />
            <Clip x={555} w={110} bg={c.plum} fg={c.text} name="BRS_Birds_U" env={BIRDS} />
          </Lane>
          <TrackHead $bg={c.plum} $fg="#8f8a95"><TailName $end={7}>irds_UK_</TailName></TrackHead>
          <FullMixer />
        </TrackRow>

        <TrackRow $h={120}>
          <Lane>
            <LaneGrid />
            <Clip x={0} w={108} bg={c.sand} fg="#2c322f" cut name="ne_Shot_15_" env={GUITAR} />
            <Clip x={666} w={110} bg={c.sand} fg="#2c322f" name="CLF_Lo" env={GUITAR} />
          </Lane>
          <TrackHead $bg={c.sand} $fg="#2c322f"><TailName $end={7}>ick_Wom</TailName></TrackHead>
          <FullMixer />
        </TrackRow>

        <TrackRow $h={75}>
          <Lane>
            <LaneGrid />
            <DropHint><span>Drop Files and Devices Here</span></DropHint>
          </Lane>
          <TrackHead $bg={c.panel} />
          <TrackHead $bg={c.panel} />
        </TrackRow>

        {["#6a5a7e", "#4f5375", "#a3aab4"].map((bg, i) => (
          <TrackRow key={bg} $h={30}>
            <Lane><LaneGrid /></Lane>
            <TrackHead $bg={bg} />
            <Mixer>{i === 2 ? <Slot $filled><Led />1/2</Slot> : <Slot />}</Mixer>
          </TrackRow>
        ))}
      </Tracks>

      <RulerRow>
        <Ruler />
        <ZoomButtons>
          <SquareButton>H</SquareButton>
          <SquareButton>W</SquareButton>
        </ZoomButtons>
      </RulerRow>

      <Devices>
        <FilterDevice />
        <MeterStrip />
        <PanDevice />
        <DropZone>Drop Audio Effects Here</DropZone>
      </Devices>

      <SampleDialog />
    </Shell>
  );
}
